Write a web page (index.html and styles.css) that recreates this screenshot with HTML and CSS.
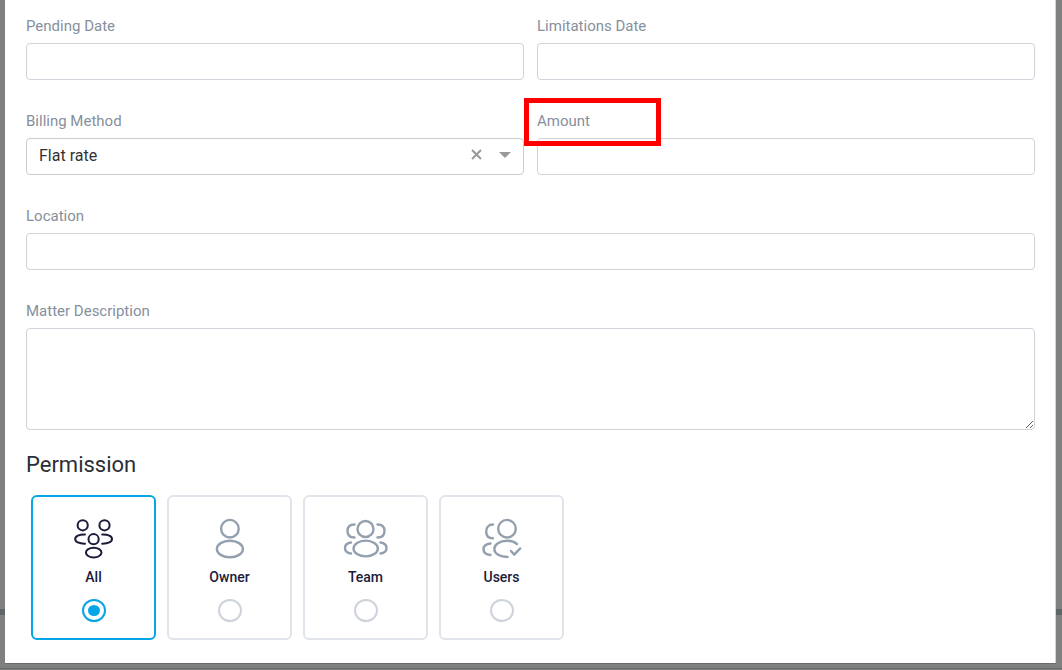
FILE: index.html
```html
<!DOCTYPE html>
<html lang="en">
<head>
<meta charset="UTF-8">
<meta name="viewport" content="width=device-width, initial-scale=1.0">
<title>Matter Details</title>
<link rel="stylesheet" href="styles.css">
</head>
<body>
<form class="modal">
  <div class="row">
    <div class="field">
      <label for="pendingDate">Pending Date</label>
      <input type="text" class="control" id="pendingDate">
    </div>
    <div class="field">
      <label for="limitationsDate">Limitations Date</label>
      <input type="text" class="control" id="limitationsDate">
    </div>
  </div>
  <div class="row">
    <div class="field">
      <label for="billingMethod">Billing Method</label>
      <div class="select-wrap">
        <select class="control" id="billingMethod">
          <option>Flat rate</option>
        </select>
        <button type="button" class="clear" aria-label="Clear">
          <svg width="11" height="11" viewBox="0 0 11 11"><path d="M1 1l9 9M10 1l-9 9"/></svg>
        </button>
        <svg class="caret" width="12" height="6" viewBox="0 0 12 6"><path d="M0 0h12l-6 6z"/></svg>
      </div>
    </div>
    <div class="field">
      <label for="amount">Amount</label>
      <input type="text" class="control" id="amount">
      <div class="highlight"></div>
    </div>
  </div>
  <div class="row">
    <div class="field">
      <label for="location">Location</label>
      <input type="text" class="control" id="location">
    </div>
  </div>
  <div class="row">
    <div class="field">
      <label for="description">Matter Description</label>
      <textarea class="control" id="description"></textarea>
    </div>
  </div>

  <h2>Permission</h2>
  <div class="cards">
    <label class="card active">
      <svg width="45" height="41" viewBox="0 0 45 41">
        <circle cx="11.7" cy="7.3" r="5.1"/>
        <circle cx="33.5" cy="7.3" r="5.1"/>
        <circle cx="22.6" cy="21.2" r="5.1"/>
        <ellipse cx="22.7" cy="34.6" rx="7.8" ry="4.8"/>
        <path d="M14 16.4C8 16.2 4.2 18.2 4.2 21s3.8 4.8 9.8 4.7"/>
        <path d="M31.2 16.4c6-.2 9.8 1.8 9.8 4.6s-3.8 4.8-9.8 4.7"/>
      </svg>
      <span>All</span>
      <input type="radio" name="permission" checked>
    </label>
    <label class="card">
      <svg width="45" height="41" viewBox="0 0 45 41">
        <circle cx="22.9" cy="10.7" r="8.8"/>
        <ellipse cx="22.9" cy="31" rx="13" ry="8.3"/>
      </svg>
      <span>Owner</span>
      <input type="radio" name="permission">
    </label>
    <label class="card">
      <svg width="45" height="41" viewBox="0 0 45 41">
        <circle cx="22.5" cy="11" r="8"/>
        <ellipse cx="22.7" cy="30.5" rx="12.2" ry="7.9"/>
        <path d="M11.5 6.5C7 6.5 4.5 9 4.500 13s2.500 6.500 7 6.500"/>
        <path d="M34.500 6.500c4.500 0 7 2.500 7 6.500s-2.500 6.500-7 6.500"/>
        <path d="M8 24.500C4.200 25 2 27 2 30s2.200 5 6 5.500"/>
        <path d="M37.500 24.500c3.800.5 6 2.500 6 5.500s-2.200 5-6 5.500"/>
      </svg>
      <span>Team</span>
      <input type="radio" name="permission">
    </label>
    <label class="card">
      <svg width="45" height="41" viewBox="0 0 45 41">
        <circle cx="28" cy="10.7" r="8.8"/>
        <path d="M14 6.500C9.500 6.500 7.200 9.500 7.200 13.500S9.500 20.300 14 20.300"/>
        <path d="M11.500 25.500C7 26 4.500 28 4.500 31.300s2.500 5.400 7 5.700"/>
        <path d="M38 26C35.500 24 31.500 22.800 28 22.800 20.500 22.800 15.300 26.500 15.300 31s5.700 8 13.200 8"/>
        <path d="M32 33l3.200 3.600 6-6.200"/>
      </svg>
      <span>Users</span>
      <input type="radio" name="permission">
    </label>
  </div>
</form>
</body>
</html>
```
FILE: styles.css
```css
* {
  box-sizing: border-box;
}

body {
  margin: 0;
  padding: 0 6px 7px 5px;
  font-family: Roboto, Arial, sans-serif;
  color: #2b2f36;
  background-color: #7f8180;
  background-image: linear-gradient(#5f6667, #5f6667), linear-gradient(#656968, #656968);
  background-size: 100% 6px, 100% 1px;
  background-position: 0 609px, 0 668px;
  background-repeat: no-repeat;
}

.modal {
  padding: 16px 20px 23px 21px;
  background-color: #fff;
  border-right: 1px solid #d5d5d5;
  box-shadow: 0 1px 0 #686b6a;
}

.row {
  display: flex;
  gap: 13px;
  margin-bottom: 31px;
}

.field {
  position: relative;
  flex: 1;
}

.field label {
  display: block;
  margin-bottom: 7px;
  font-size: 15px;
  line-height: 20px;
  color: #86909c;
}

.control {
  display: block;
  width: 100%;
  height: 37px;
  padding: 0 12px;
  border: 1px solid #ced4da;
  border-radius: 4px;
  background-color: #fff;
  font-family: inherit;
  font-size: 16px;
  color: #333;
  outline: none;
}

textarea.control {
  height: 102px;
  resize: vertical;
}

.select-wrap {
  position: relative;
}

select.control {
  appearance: none;
  padding-bottom: 2px;
  border-color: #ccc;
}

.clear {
  position: absolute;
  top: 11px;
  right: 42px;
  width: 11px;
  height: 11px;
  padding: 0;
  border: none;
  background: none;
  cursor: pointer;
}

.clear svg {
  display: block;
  fill: none;
  stroke: #999;
  stroke-width: 2;
}

.caret {
  position: absolute;
  top: 14px;
  right: 13px;
  fill: #999;
  pointer-events: none;
}

.highlight {
  position: absolute;
  top: -13px;
  left: -13px;
  width: 137px;
  height: 48px;
  border: 5px solid #f00;
  pointer-events: none;
}

h2 {
  margin: -10px 0 17px;
  font-size: 22px;
  font-weight: 400;
  line-height: 27px;
}

.cards {
  display: flex;
  gap: 11px;
  padding-left: 5px;
}

.card {
  display: flex;
  flex-direction: column;
  align-items: center;
  width: 125px;
  padding: 21px 0 16px;
  border: 2px solid #e1e5eb;
  border-radius: 6px;
  font-size: 14px;
  font-weight: 500;
  line-height: 20px;
  color: #1b1b3a;
  cursor: pointer;
}

.card svg {
  fill: none;
  stroke: #94a0ae;
  stroke-width: 2.4;
  stroke-linecap: round;
  stroke-linejoin: round;
}

.card span {
  margin: 8px 0 12px;
}

.card input {
  appearance: none;
  width: 24px;
  height: 23px;
  margin: 0;
  border: 2px solid #ced2da;
  border-radius: 50%;
}

.card.active {
  border-color: #05a5e6;
}

.card.active svg {
  stroke: #1b1b3a;
  stroke-width: 2;
}

.card input:checked {
  padding: 4px;
  border-color: #05a5e6;
  background-color: #05a5e6;
  background-clip: content-box;
}
```
